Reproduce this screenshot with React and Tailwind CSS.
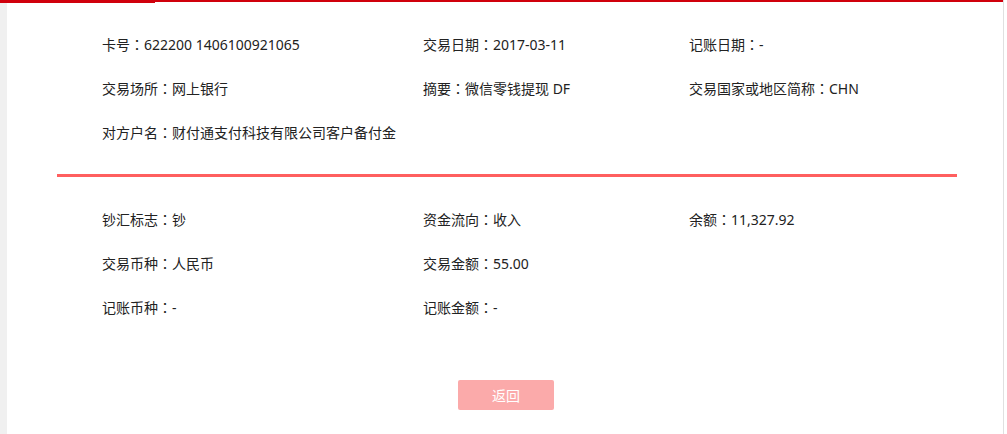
import React from "react";

const font = { fontFamily: '"Noto Sans", "Noto Sans CJK SC", sans-serif' };

function Item({ label, value }) {
  if (!label) return <div />;
  return (
    <div className="whitespace-nowrap">
      {label}
      <span style={{ fontFamily: '"Noto Sans CJK TC", "Noto Sans CJK SC", sans-serif' }}>：</span>
      {value}
    </div>
  );
}

function Row({ items }) {
  return (
    <div className="grid grid-cols-[321px_266px_1fr] h-[44px] items-center">
      {items.map((t, i) => (
        <Item key={i} label={t[0]} value={t[1]} />
      ))}
    </div>
  );
}

export default function App() {
  return (
    <div className="w-[1007px] h-[434px] bg-white flex text-[14px] text-[#222] overflow-hidden" style={font}>
      <div className="w-[1003px] flex flex-col">
        <div className="relative h-[3px] shrink-0">
          <div className="absolute left-0 top-0 w-full h-[2px] bg-[#d0000c]" />
          <div className="absolute left-0 top-0 w-[155px] h-[3px] bg-[#d0000c]" />
        </div>
        <div className="flex flex-1">
          <div className="w-[7px] bg-[#f0f0f0] shrink-0" />
          <div className="flex-1 flex flex-col pt-[19px]">
            <div className="pl-[95px]">
              <Row items={[["卡号", "622200 1406100921065"], ["交易日期", "2017-03-11"], ["记账日期", "-"]]} />
              <Row items={[["交易场所", "网上银行"], ["摘要", "微信零钱提现 DF"], ["交易国家或地区简称", "CHN"]]} />
              <Row items={[["对方户名", "财付通支付科技有限公司客户备付金"], [], []]} />
            </div>
            <div className="ml-[50px] w-[900px] h-[3px] bg-[#ff5f5f] mt-[20px]" />
            <div className="pl-[95px] mt-[20px]">
              <Row items={[["钞汇标志", "钞"], ["资金流向", "收入"], ["余额", "11,327.92"]]} />
              <Row items={[["交易币种", "人民币"], ["交易金额", "55.00"], []]} />
              <Row items={[["记账币种", "-"], ["记账金额", "-"], []]} />
            </div>
            <div className="flex justify-center mt-[51px] pl-[2px]">
              <button className="w-[96px] h-[30px] rounded-[2px] bg-[#fbaaaa] text-white text-[14px]" style={font}>
                返回
              </button>
            </div>
          </div>
        </div>
      </div>
      <div className="w-[4px] border-l border-[#e0e0e0] bg-white" />
    </div>
  );
}
